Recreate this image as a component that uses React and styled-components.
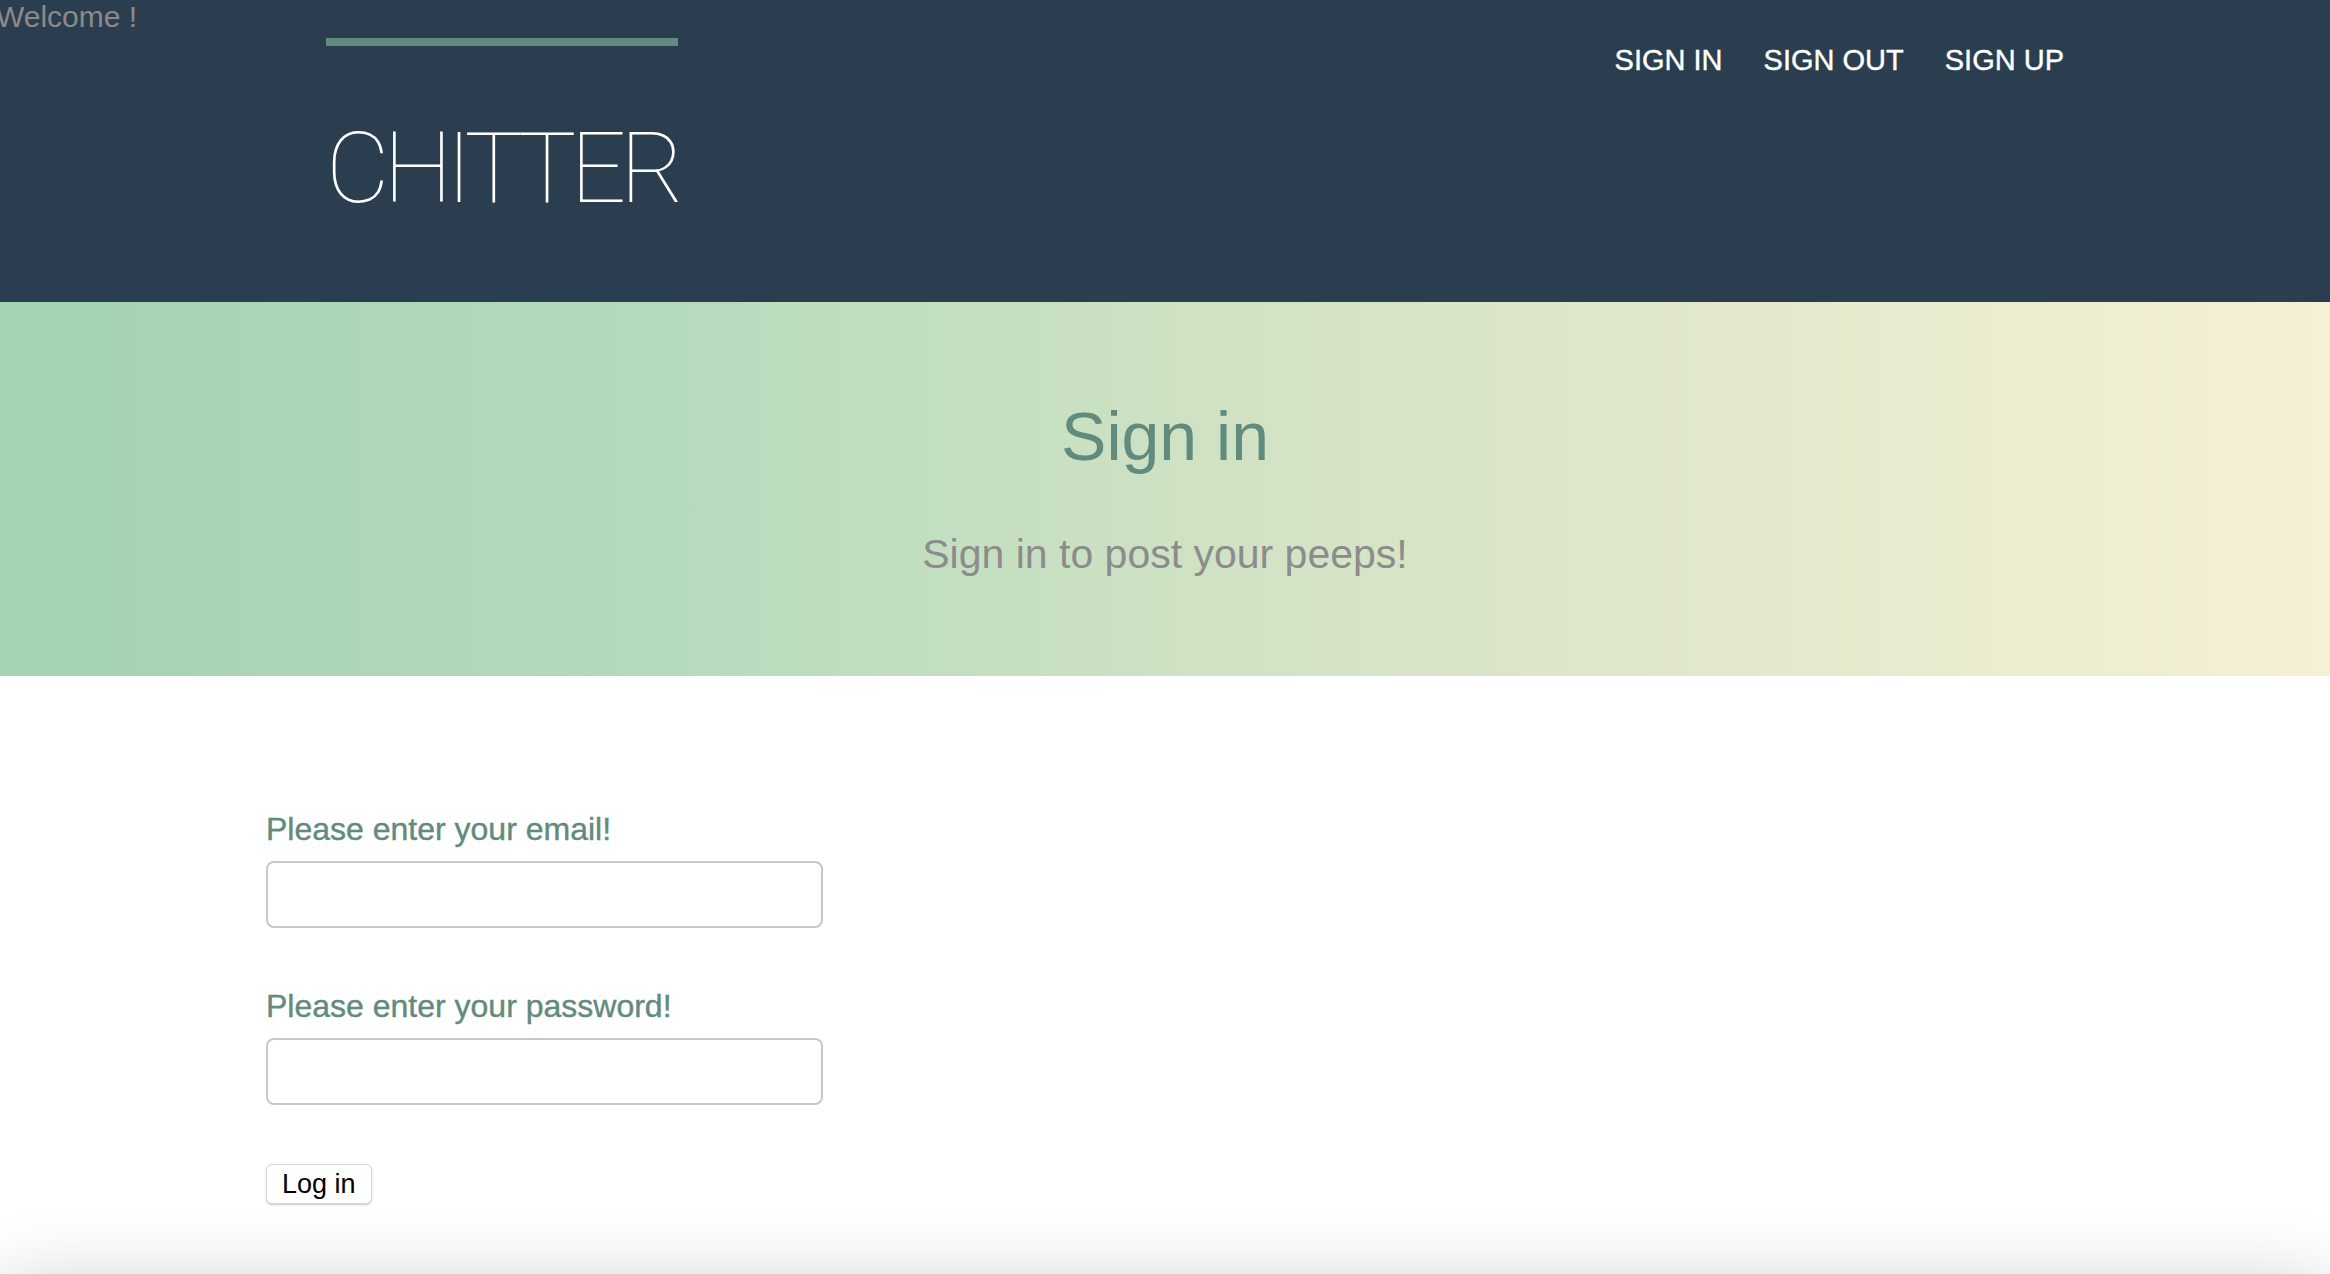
import React from "react";
import styled, { createGlobalStyle } from "styled-components";

const GlobalStyle = createGlobalStyle`
  * {
    box-sizing: border-box;
  }

  body {
    margin: 0;
    font-family: "Liberation Sans", Arial, sans-serif;
    background: #fff;
    overflow: hidden;
  }
`;

const Header = styled.header`
  height: 302px;
  background: #2a3e50;
`;

const Welcome = styled.p`
  margin: 0 0 0 -4px;
  font-size: 30px;
  line-height: 34px;
  color: #8a8a8a;
`;

const TopRow = styled.div`
  display: flex;
  justify-content: space-between;
  align-items: flex-start;
  padding: 0 266px 0 326px;
`;

const Brand = styled.h1`
  display: inline-block;
  margin: 4px 0 0;
  padding-top: 74px;
  border-top: 8px solid #628a7d;
  font-family: Roboto, "Liberation Sans", sans-serif;
  font-weight: 100;
  font-size: 98px;
  line-height: 1;
  letter-spacing: -6px;
  color: #fff;
`;

const Nav = styled.nav`
  display: flex;
  gap: 41px;
  margin-top: 8px;
`;

const NavLink = styled.a`
  font-size: 29px;
  line-height: 36px;
  color: #fff;
  text-decoration: none;
  -webkit-text-stroke: 0.4px #fff;
`;

const Hero = styled.section`
  height: 374px;
  padding-top: 100px;
  display: flex;
  flex-direction: column;
  align-items: center;
  background: linear-gradient(to right, #a3d3b1 0%, #b2d9bb 25%, #d3e3c5 55%, #f6f0d5 100%);
`;

const HeroTitle = styled.h2`
  margin: 0;
  font-size: 68px;
  font-weight: 400;
  line-height: 1;
  color: #628a7d;
`;

const HeroText = styled.p`
  margin: 64px 0 0;
  font-size: 41px;
  line-height: 1;
  color: #8c8c8c;
`;

const Form = styled.form`
  display: flex;
  flex-direction: column;
  align-items: flex-start;
  padding: 137px 0 0 266px;
`;

const Label = styled.label`
  display: block;
  margin-top: ${p => (p.$first ? "0" : "62px")};
  font-size: 32px;
  line-height: 1;
  color: #628a7d;
  -webkit-text-stroke: 0.4px #628a7d;
`;

const Input = styled.input`
  display: block;
  width: 557px;
  height: 67px;
  margin-top: 16px;
  border: 2px solid #c6c9cc;
  border-radius: 8px;
  background: #fff;
  font-size: 26px;
  padding: 0 14px;
  outline: none;
`;

const Button = styled.button`
  margin-top: 59px;
  height: 40px;
  padding: 0 15px;
  background: #fff;
  border: 1px solid #d8d8d8;
  border-radius: 6px;
  box-shadow: 0 1px 2px rgba(0, 0, 0, 0.22);
  font-family: "Liberation Sans", Arial, sans-serif;
  font-size: 27px;
  color: #000;
`;

const Footer = styled.footer`
  height: 200px;
  margin-top: 74px;
  background: #fff;
  box-shadow: 0 0 70px rgba(0, 0, 0, 0.17);
`;

function App() {
  return (
    <React.Fragment>
      <GlobalStyle />
      <Header>
        <Welcome>Welcome !</Welcome>
        <TopRow>
          <Brand>CHITTER</Brand>
          <Nav>
            <NavLink href="#">SIGN IN</NavLink>
            <NavLink href="#">SIGN OUT</NavLink>
            <NavLink href="#">SIGN UP</NavLink>
          </Nav>
        </TopRow>
      </Header>
      <Hero>
        <HeroTitle>Sign in</HeroTitle>
        <HeroText>Sign in to post your peeps!</HeroText>
      </Hero>
      <Form onSubmit={e => e.preventDefault()}>
        <Label $first htmlFor="email">Please enter your email!</Label>
        <Input id="email" type="email" />
        <Label htmlFor="password">Please enter your password!</Label>
        <Input id="password" type="password" />
        <Button type="submit">Log in</Button>
      </Form>
      <Footer />
    </React.Fragment>
  );
}

export default App;
